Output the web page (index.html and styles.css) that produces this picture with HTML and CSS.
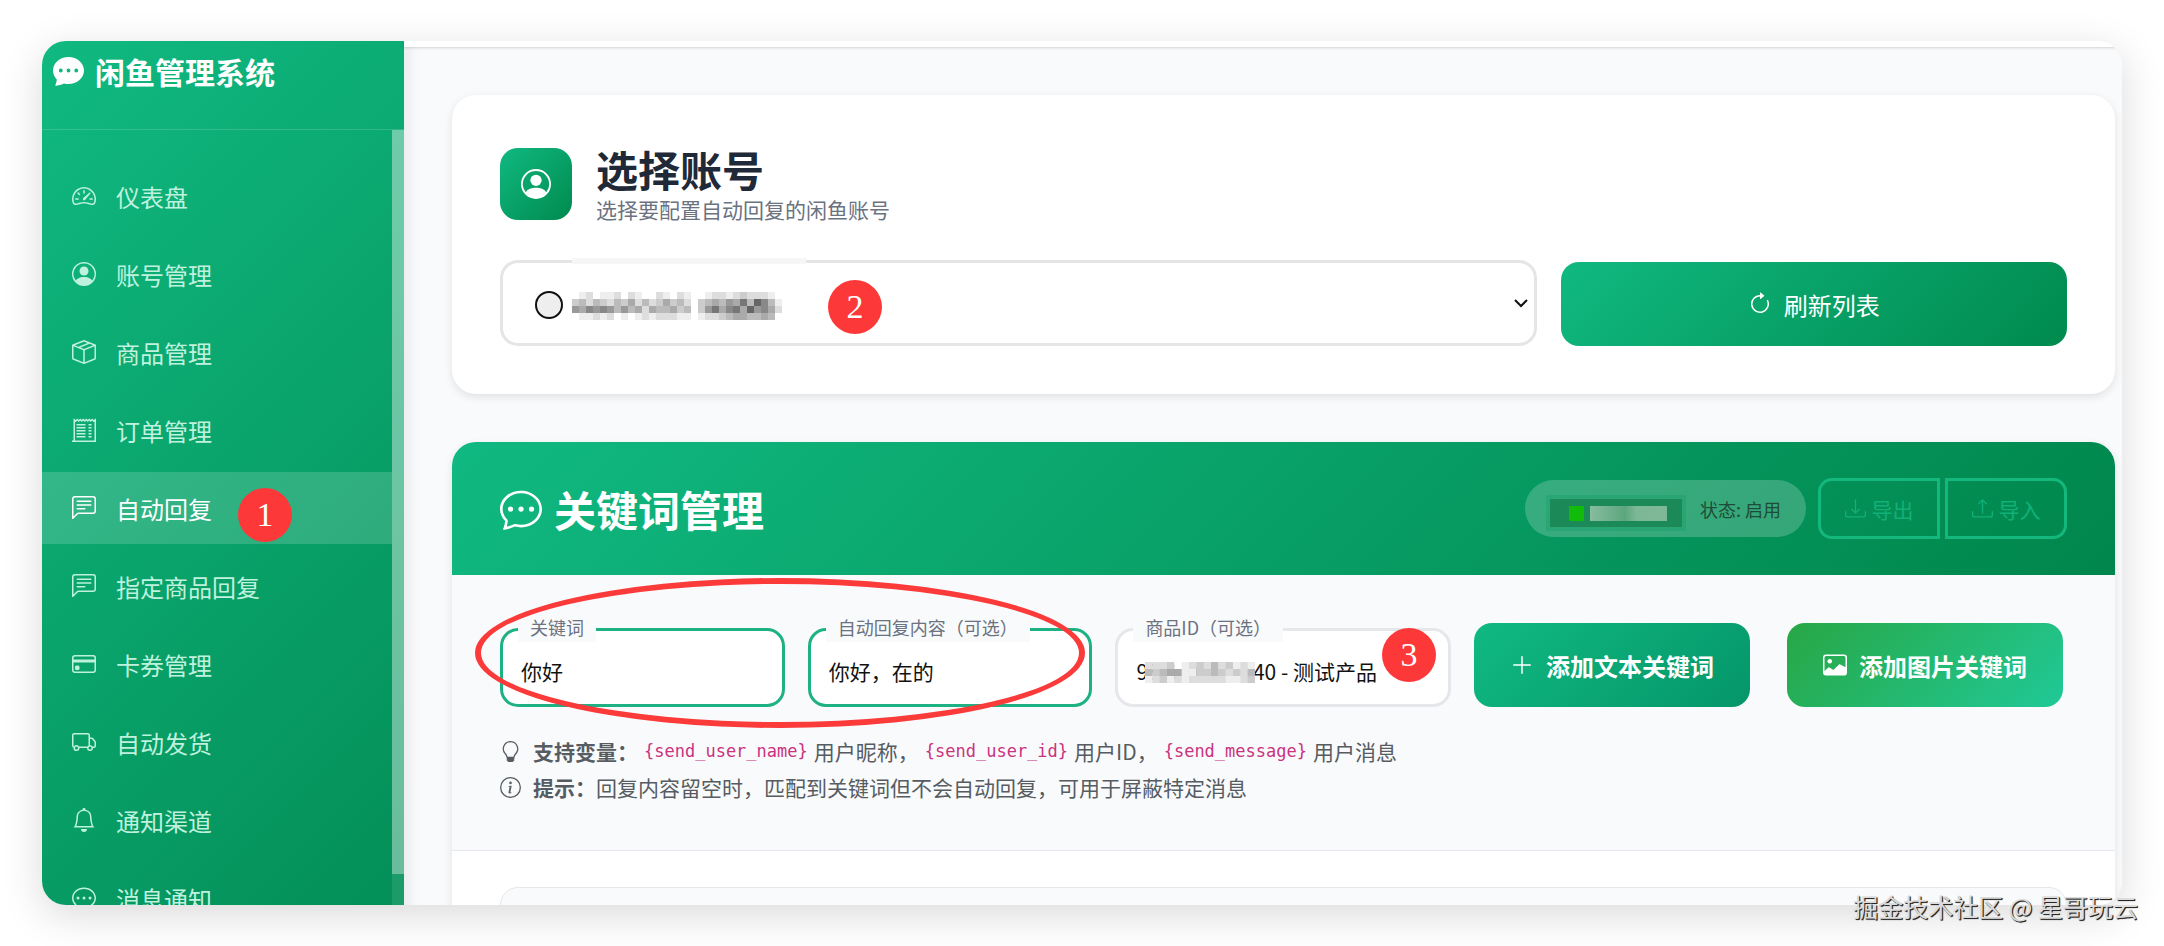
FILE: index.html
```html
<!DOCTYPE html>
<html lang="zh-CN">
<head>
  <meta charset="UTF-8">
  <meta name="viewport" content="width=device-width, initial-scale=1.0">
  <title>闲鱼管理系统</title>
  <link rel="stylesheet" href="styles.css">
</head>
<body>
  <!-- 图标 -->
  <svg class="sprite" aria-hidden="true">
    <symbol id="i-chat-fill" viewBox="0 0 16 16"><path d="M16 8c0 3.866-3.582 7-8 7a9 9 0 0 1-2.347-.306c-.584.296-1.925.864-4.181 1.234-.2.032-.352-.176-.273-.362.354-.836.674-1.95.77-2.966C.744 11.37 0 9.76 0 8c0-3.866 3.582-7 8-7s8 3.134 8 7M5 8a1 1 0 1 0-2 0 1 1 0 0 0 2 0m4 0a1 1 0 1 0-2 0 1 1 0 0 0 2 0m3 1a1 1 0 1 0 0-2 1 1 0 0 0 0 2"/></symbol>
    <symbol id="i-chat-dots" viewBox="0 0 16 16"><path d="M5 8a1 1 0 1 1-2 0 1 1 0 0 1 2 0m4 0a1 1 0 1 1-2 0 1 1 0 0 1 2 0m3 1a1 1 0 1 0 0-2 1 1 0 0 0 0 2"/><path d="m2.165 15.803.02-.004c1.83-.363 2.948-.842 3.468-1.105A9 9 0 0 0 8 15c4.418 0 8-3.134 8-7s-3.582-7-8-7-8 3.134-8 7c0 1.76.743 3.37 1.97 4.6a10.4 10.4 0 0 1-.524 2.318l-.003.011a11 11 0 0 1-.244.637c-.079.186.074.394.273.362a22 22 0 0 0 .693-.125m.8-3.108a1 1 0 0 0-.287-.801C1.618 10.83 1 9.468 1 8c0-3.192 3.004-6 7-6s7 2.808 7 6-3.004 6-7 6a8 8 0 0 1-2.088-.272 1 1 0 0 0-.711.074c-.387.196-1.24.57-2.634.893a11 11 0 0 0 .398-2"/></symbol>
    <symbol id="i-speed" viewBox="0 0 16 16"><path d="M8 4a.5.5 0 0 1 .5.5V6a.5.5 0 0 1-1 0V4.5A.5.5 0 0 1 8 4M3.732 5.732a.5.5 0 0 1 .707 0l.915.914a.5.5 0 1 1-.708.708l-.914-.915a.5.5 0 0 1 0-.707M2 10a.5.5 0 0 1 .5-.5h1.586a.5.5 0 0 1 0 1H2.5A.5.5 0 0 1 2 10m9.5 0a.5.5 0 0 1 .5-.5h1.5a.5.5 0 0 1 0 1H12a.5.5 0 0 1-.5-.5m.754-4.246a.39.39 0 0 0-.527-.02L7.547 9.31a.91.91 0 1 0 1.302 1.258l3.434-4.297a.39.39 0 0 0-.029-.518z"/><path fill-rule="evenodd" d="M0 10a8 8 0 1 1 15.547 2.661c-.442 1.253-1.845 1.602-2.932 1.25C11.309 13.488 9.475 13 8 13c-1.474 0-3.31.488-4.615.911-1.087.352-2.49.003-2.932-1.25A8 8 0 0 1 0 10m8-7a7 7 0 0 0-6.603 9.329c.203.575.923.876 1.68.63C4.397 12.533 6.358 12 8 12s3.604.532 4.923.96c.757.245 1.477-.056 1.68-.631A7 7 0 0 0 8 3"/></symbol>
    <symbol id="i-person" viewBox="0 0 16 16"><path d="M11 6a3 3 0 1 1-6 0 3 3 0 0 1 6 0"/><path fill-rule="evenodd" d="M0 8a8 8 0 1 1 16 0A8 8 0 0 1 0 8m8-7a7 7 0 0 0-5.468 11.37C3.242 11.226 4.805 10 8 10s4.757 1.225 5.468 2.37A7 7 0 0 0 8 1"/></symbol>
    <symbol id="i-box" viewBox="0 0 16 16"><path d="M8.186 1.113a.5.5 0 0 0-.372 0L1.846 3.5l2.404.961L10.404 2zm3.564 1.426L5.596 5 8 5.961 14.154 3.5zm3.25 1.7-6.5 2.6v7.922l6.5-2.6V4.24zM7.5 14.762V6.838L1 4.239v7.923zM7.443.184a1.5 1.5 0 0 1 1.114 0l7.129 2.852A.5.5 0 0 1 16 3.5v8.662a1 1 0 0 1-.629.928l-7.185 2.874a.5.5 0 0 1-.372 0L.63 13.09a1 1 0 0 1-.63-.928V3.5a.5.5 0 0 1 .314-.464z"/></symbol>
    <symbol id="i-receipt" viewBox="0 0 16 16"><path fill="none" stroke="currentColor" d="M1.5 15.5V1.2l1 .8 1-1 1 1 1-1 1 1 1-1 1 1 1-1 1 1 1-1 1 1 1-1 1 1 1-.8v14.3M0 15.5h16M3 4.5h6M3 6.5h6M3 8.5h6M3 10.5h6M3 12.5h6M11 4.5h2M11 6.5h2M11 8.5h2M11 10.5h2M11 12.5h2"/></symbol>
    <symbol id="i-chat-text" viewBox="0 0 16 16"><path d="M14 1a1 1 0 0 1 1 1v8a1 1 0 0 1-1 1H4.414A2 2 0 0 0 3 11.586l-2 2V2a1 1 0 0 1 1-1zM2 0a2 2 0 0 0-2 2v12.793a.5.5 0 0 0 .854.353l2.853-2.853A1 1 0 0 1 4.414 12H14a2 2 0 0 0 2-2V2a2 2 0 0 0-2-2z"/><path d="M3 3.5a.5.5 0 0 1 .5-.5h9a.5.5 0 0 1 0 1h-9a.5.5 0 0 1-.5-.5M3 6a.5.5 0 0 1 .5-.5h9a.5.5 0 0 1 0 1h-9A.5.5 0 0 1 3 6m0 2.5a.5.5 0 0 1 .5-.5h5a.5.5 0 0 1 0 1h-5a.5.5 0 0 1-.5-.5"/></symbol>
    <symbol id="i-card" viewBox="0 0 16 16"><path d="M0 4a2 2 0 0 1 2-2h12a2 2 0 0 1 2 2v8a2 2 0 0 1-2 2H2a2 2 0 0 1-2-2zm2-1a1 1 0 0 0-1 1v1h14V4a1 1 0 0 0-1-1zm13 4H1v5a1 1 0 0 0 1 1h12a1 1 0 0 0 1-1z"/><path d="M2 10a1 1 0 0 1 1-1h1a1 1 0 0 1 1 1v1a1 1 0 0 1-1 1H3a1 1 0 0 1-1-1z"/></symbol>
    <symbol id="i-truck" viewBox="0 0 16 16"><path d="M0 3.5A1.5 1.5 0 0 1 1.5 2h9A1.5 1.5 0 0 1 12 3.5V5h1.02a1.5 1.5 0 0 1 1.17.563l1.481 1.85a1.5 1.5 0 0 1 .329.938V10.5a1.5 1.5 0 0 1-1.5 1.5H14a2 2 0 1 1-4 0H5a2 2 0 1 1-3.998-.085A1.5 1.5 0 0 1 0 10.5zm1.294 7.456A2 2 0 0 1 4.732 11h5.536a2 2 0 0 1 .732-.732V3.5a.5.5 0 0 0-.5-.5h-9a.5.5 0 0 0-.5.5v7a.5.5 0 0 0 .294.456M12 10a2 2 0 0 1 1.732 1h.768a.5.5 0 0 0 .5-.5V8.35a.5.5 0 0 0-.11-.312l-1.48-1.85A.5.5 0 0 0 13.02 6H12zm-9 1a1 1 0 1 0 0 2 1 1 0 0 0 0-2m9 0a1 1 0 1 0 0 2 1 1 0 0 0 0-2"/></symbol>
    <symbol id="i-bell" viewBox="0 0 16 16"><path d="M8 16a2 2 0 0 0 2-2H6a2 2 0 0 0 2 2M8 1.918l-.797.161A4 4 0 0 0 4 6c0 .628-.134 2.197-.459 3.742-.16.767-.376 1.566-.663 2.258h10.244c-.287-.692-.502-1.49-.663-2.258C12.134 8.197 12 6.628 12 6a4 4 0 0 0-3.203-3.92zM14.22 12c.223.447.481.801.78 1H1c.299-.199.557-.553.78-1C2.68 10.2 3 6.88 3 6c0-2.42 1.72-4.44 4.005-4.901a1 1 0 1 1 1.99 0A5 5 0 0 1 13 6c0 .88.32 4.2 1.22 6"/></symbol>
    <symbol id="i-refresh" viewBox="0 0 16 16"><path fill-rule="evenodd" d="M8 3a5 5 0 1 0 4.546 2.914.5.5 0 0 1 .908-.417A6 6 0 1 1 8 2z"/><path d="M8 4.466V.534a.25.25 0 0 1 .41-.192l2.36 1.966c.12.1.12.284 0 .384L8.41 4.658A.25.25 0 0 1 8 4.466"/></symbol>
    <symbol id="i-download" viewBox="0 0 16 16"><path d="M.5 9.9a.5.5 0 0 1 .5.5v2.5a1 1 0 0 0 1 1h12a1 1 0 0 0 1-1v-2.5a.5.5 0 0 1 1 0v2.5a2 2 0 0 1-2 2H2a2 2 0 0 1-2-2v-2.5a.5.5 0 0 1 .5-.5"/><path d="M7.646 11.854a.5.5 0 0 0 .708 0l3-3a.5.5 0 0 0-.708-.708L8.5 10.293V1.5a.5.5 0 0 0-1 0v8.793L5.354 8.146a.5.5 0 1 0-.708.708z"/></symbol>
    <symbol id="i-upload" viewBox="0 0 16 16"><path d="M.5 9.9a.5.5 0 0 1 .5.5v2.5a1 1 0 0 0 1 1h12a1 1 0 0 0 1-1v-2.5a.5.5 0 0 1 1 0v2.5a2 2 0 0 1-2 2H2a2 2 0 0 1-2-2v-2.5a.5.5 0 0 1 .5-.5"/><path d="M7.646 1.146a.5.5 0 0 1 .708 0l3 3a.5.5 0 0 1-.708.708L8.5 2.707V11.5a.5.5 0 0 1-1 0V2.707L5.354 4.854a.5.5 0 1 1-.708-.708z"/></symbol>
    <symbol id="i-plus" viewBox="0 0 16 16"><path d="M8 2a.5.5 0 0 1 .5.5v5h5a.5.5 0 0 1 0 1h-5v5a.5.5 0 0 1-1 0v-5h-5a.5.5 0 0 1 0-1h5v-5A.5.5 0 0 1 8 2"/></symbol>
    <symbol id="i-image" viewBox="0 0 16 16"><path d="M6.002 5.5a1.5 1.5 0 1 1-3 0 1.5 1.5 0 0 1 3 0"/><path d="M2.002 1a2 2 0 0 0-2 2v10a2 2 0 0 0 2 2h12a2 2 0 0 0 2-2V3a2 2 0 0 0-2-2zm12 1a1 1 0 0 1 1 1v6.5l-3.777-1.947a.5.5 0 0 0-.577.093l-3.71 3.71-2.66-1.772a.5.5 0 0 0-.63.062L1.002 12V3a1 1 0 0 1 1-1z"/></symbol>
    <symbol id="i-bulb" viewBox="0 0 16 16"><path d="M2 6a6 6 0 1 1 10.174 4.31c-.203.196-.359.4-.453.619l-.762 1.769A.5.5 0 0 1 10.5 13a.5.5 0 0 1 0 1 .5.5 0 0 1 0 1l-.224.447a1 1 0 0 1-.894.553H6.618a1 1 0 0 1-.894-.553L5.5 15a.5.5 0 0 1 0-1 .5.5 0 0 1 0-1 .5.5 0 0 1-.46-.302l-.761-1.77a2 2 0 0 0-.453-.618A5.98 5.98 0 0 1 2 6m6-5a5 5 0 0 0-3.479 8.592c.263.254.514.564.676.941L5.83 12h4.342l.632-1.467c.162-.377.413-.687.676-.941A5 5 0 0 0 8 1"/></symbol>
    <symbol id="i-info" viewBox="0 0 16 16"><path d="M8 15A7 7 0 1 1 8 1a7 7 0 0 1 0 14m0 1A8 8 0 1 0 8 0a8 8 0 0 0 0 16"/><path d="m8.93 6.588-2.29.287-.082.38.45.083c.294.07.352.176.288.469l-.738 3.468c-.194.897.105 1.319.808 1.319.545 0 1.178-.252 1.465-.598l.088-.416c-.2.176-.492.246-.686.246-.275 0-.375-.193-.304-.533zM9 4.5a1 1 0 1 1-2 0 1 1 0 0 1 2 0"/></symbol>
  </svg>

  <div class="window">
    <aside class="sidebar">
      <div class="brand">
        <svg class="brand-icon"><use href="#i-chat-fill"/></svg>
        <span>闲鱼管理系统</span>
      </div>
      <div class="nav-wrap">
        <nav class="nav">
          <a class="nav-link" href="#"><svg class="icon"><use href="#i-speed"/></svg>仪表盘</a>
          <a class="nav-link" href="#"><svg class="icon"><use href="#i-person"/></svg>账号管理</a>
          <a class="nav-link" href="#"><svg class="icon"><use href="#i-box"/></svg>商品管理</a>
          <a class="nav-link" href="#"><svg class="icon"><use href="#i-receipt"/></svg>订单管理</a>
          <a class="nav-link active" href="#"><svg class="icon"><use href="#i-chat-text"/></svg>自动回复<span class="mark mark-nav">1</span></a>
          <a class="nav-link" href="#"><svg class="icon"><use href="#i-chat-text"/></svg>指定商品回复</a>
          <a class="nav-link" href="#"><svg class="icon"><use href="#i-card"/></svg>卡券管理</a>
          <a class="nav-link" href="#"><svg class="icon"><use href="#i-truck"/></svg>自动发货</a>
          <a class="nav-link" href="#"><svg class="icon"><use href="#i-bell"/></svg>通知渠道</a>
          <a class="nav-link" href="#"><svg class="icon"><use href="#i-chat-dots"/></svg>消息通知</a>
        </nav>
        <div class="scrollbar"><div class="thumb"></div></div>
      </div>
    </aside>

    <main class="main">
      <div class="topbar"></div>
      <div class="content">
        <!-- 选择账号 -->
        <section class="card account">
          <div class="account-head">
            <div class="head-icon"><svg><use href="#i-person"/></svg></div>
            <div>
              <h2 class="title">选择账号</h2>
              <p class="subtitle">选择要配置自动回复的闲鱼账号</p>
            </div>
          </div>
          <div class="row">
            <div class="col-8 select-wrap">
              <select class="account-select" aria-label="选择账号">
                <option></option>
              </select>
              <span class="status-dot"></span>
              <span class="select-patch"></span>
              <svg class="mosaic mosaic-account" viewBox="0 0 30 4" preserveAspectRatio="none" data-rows="fedfeedfdeffdefdeffeddedcdddef,cbdbcdbcadbdcacbdfcbab9a7b68be,9a8989b9badabbacbfc97a87a698ad,feededfefededddeefeddcbaabbabf"></svg>
              <svg class="chevron" viewBox="0 0 14 9"><path d="M1 1l6 6 6-6"/></svg>
              <span class="mark mark-select">2</span>
            </div>
            <div class="col-4">
              <button class="btn btn-refresh" type="button"><svg class="icon"><use href="#i-refresh"/></svg>刷新列表</button>
            </div>
          </div>
        </section>

        <!-- 关键词管理 -->
        <section class="card keyword">
          <div class="keyword-head">
            <h2 class="keyword-title"><svg><use href="#i-chat-dots"/></svg>关键词管理</h2>
            <div class="actions">
              <div class="pill">
                <span class="pill-cover"><i class="pill-green"></i><i class="pill-gray"></i></span>
                <span>状态: 启用</span>
              </div>
              <div class="btn-group">
                <button class="btn-outline" type="button"><svg><use href="#i-download"/></svg>导出</button>
                <button class="btn-outline" type="button"><svg><use href="#i-upload"/></svg>导入</button>
              </div>
            </div>
          </div>
          <div class="keyword-body">
            <div class="form-row">
              <div class="field">
                <label for="keyword">关键词</label>
                <input class="done" id="keyword" type="text" value="你好">
              </div>
              <div class="field">
                <label for="reply">自动回复内容（可选）</label>
                <input class="done" id="reply" type="text" value="你好，在的">
              </div>
              <div class="field field-item">
                <label for="item">商品ID（可选）</label>
                <input id="item" type="text" value="980000000040 - 测试产品">
                <svg class="mosaic mosaic-item" viewBox="0 0 15 3" preserveAspectRatio="none" data-rows="dddcfedcdbdcede,bcbaaeeccbcdcdb,edcededddddeedc"></svg>
                <span class="mark mark-item">3</span>
              </div>
              <button class="btn btn-add" type="button"><svg class="icon"><use href="#i-plus"/></svg>添加文本关键词</button>
              <button class="btn btn-add btn-image" type="button"><svg class="icon"><use href="#i-image"/></svg>添加图片关键词</button>
              <span class="circle"></span>
            </div>
            <div class="hints">
              <p><svg><use href="#i-bulb"/></svg><strong>支持变量：</strong><code>{send_user_name}</code>用户昵称，<code>{send_user_id}</code>用户ID，<code>{send_message}</code>用户消息</p>
              <p><svg><use href="#i-info"/></svg><strong>提示：</strong>回复内容留空时，匹配到关键词但不会自动回复，可用于屏蔽特定消息</p>
            </div>
          </div>
          <div class="list-wrap">
            <div class="list"></div>
          </div>
        </section>
      </div>
    </main>
  </div>
  <div class="watermark">掘金技术社区 @ 星哥玩云</div>
  <script src="script.js"></script>
</body>
</html>
```
FILE: styles.css
```css
* {
  box-sizing: border-box;
}

body {
  margin: 0;
  padding: 41px 42px;
  background: #fff;
  font-family: "Noto Sans CJK SC", sans-serif;
  color: #1f2937;
}

h2,
p {
  margin: 0;
}

svg {
  fill: currentColor;
  flex: none;
}

.sprite {
  display: none;
}

.window {
  display: flex;
  height: calc(100vh - 82px);
  border-radius: 24px;
  overflow: hidden;
  box-shadow: 0 10px 40px rgba(0, 0, 0, 0.15);
}

/* 侧边栏 */
.sidebar {
  width: 362px;
  flex: none;
  display: flex;
  flex-direction: column;
  background: linear-gradient(135deg, #10b981, #038f57);
  color: #fff;
}

.brand {
  height: 89px;
  flex: none;
  display: flex;
  gap: 11px;
  padding: 8px 11px;
  font-size: 30px;
  line-height: 44px;
  font-weight: bold;
  border-bottom: 1px solid rgba(255, 255, 255, 0.15);
}

.brand-icon {
  width: 31px;
  height: 31px;
  margin-top: 6px;
}

.nav-wrap {
  flex: 1;
  min-height: 0;
  display: flex;
}

.nav {
  flex: 1;
  padding-top: 30px;
  overflow: hidden;
}

.nav-link {
  position: relative;
  display: flex;
  align-items: center;
  gap: 20px;
  height: 72px;
  margin-bottom: 6px;
  padding-left: 30px;
  font-size: 24px;
  color: #bff2de;
  text-decoration: none;
}

.nav-link.active {
  color: #fff;
  background: rgba(255, 255, 255, 0.16);
}

.icon {
  width: 24px;
  height: 24px;
}

.scrollbar {
  width: 12px;
  background: rgba(255, 255, 255, 0.1);
}

.thumb {
  height: 96%;
  background: rgba(255, 255, 255, 0.34);
}

/* 主区域 */
.main {
  flex: 1;
  min-width: 0;
  background: #f9fafc;
  box-shadow: inset 14px 0 12px -8px rgba(0, 0, 0, 0.06);
}

.topbar {
  height: 6px;
  background: #fff;
  box-shadow: 0 1px 3px rgba(0, 0, 0, 0.16);
}

.content {
  padding: 48px 7px 0 48px;
}

.card {
  background: #fff;
  border-radius: 24px;
  box-shadow: 0 3px 8px rgba(0, 0, 0, 0.1);
}

.account {
  padding: 53px 48px 48px;
  margin-bottom: 48px;
}

.account-head {
  display: flex;
  gap: 24px;
  margin-bottom: 37px;
}

.head-icon {
  width: 72px;
  height: 72px;
  display: flex;
  align-items: center;
  justify-content: center;
  border-radius: 18px;
  color: #fff;
  background: linear-gradient(135deg, #10b981, #008a4e);
}

.head-icon svg {
  width: 30px;
  height: 30px;
}

.title {
  font-size: 42px;
  line-height: 42px;
}

.subtitle {
  font-size: 21px;
  line-height: 28px;
  margin-top: 5px;
  color: #6b7280;
}

.row {
  display: flex;
  align-items: flex-end;
  margin: 0 -12px;
}

.col-8,
.col-4 {
  padding: 0 12px;
}

.col-8 {
  width: 66.67%;
}

.col-4 {
  width: 33.33%;
}

.select-wrap {
  position: relative;
}

.account-select {
  display: block;
  width: 100%;
  height: 86px;
  appearance: none;
  border: 3px solid #e5e5e5;
  border-radius: 18px;
  background: #fff;
}

.status-dot {
  position: absolute;
  left: 47px;
  top: 31px;
  width: 28px;
  height: 28px;
  border: 2px solid #111;
  border-radius: 50%;
  background: #eee;
}

.select-patch {
  position: absolute;
  left: 84px;
  top: -2px;
  width: 234px;
  height: 6px;
  background: #f6f6f6;
}

.mosaic {
  position: absolute;
}

.mosaic-account {
  left: 84px;
  top: 32px;
  width: 210px;
  height: 28px;
}

.chevron {
  position: absolute;
  right: 21px;
  top: 39px;
  width: 14px;
  height: 9px;
  fill: none;
  stroke: #111;
  stroke-width: 2;
}

.mark {
  position: absolute;
  width: 54px;
  height: 54px;
  border-radius: 50%;
  background: #fd3838;
  color: #fff;
  font-family: "Liberation Serif", serif;
  font-size: 34px;
  line-height: 54px;
  text-align: center;
}

.mark-nav {
  left: 196px;
  top: 16px;
}

.mark-select {
  left: 340px;
  top: 20px;
}

.mark-item {
  right: 15px;
  top: 0;
}

.btn {
  height: 84px;
  display: flex;
  align-items: center;
  justify-content: center;
  gap: 12px;
  border: none;
  border-radius: 18px;
  color: #fff;
  font-family: inherit;
  font-size: 24px;
  cursor: pointer;
}

.btn-refresh {
  width: 100%;
  background: linear-gradient(135deg, #10b981, #008a4e);
}

.keyword-head {
  display: flex;
  align-items: center;
  justify-content: space-between;
  height: 133px;
  padding: 0 48px;
  border-radius: 24px 24px 0 0;
  background: linear-gradient(135deg, #10b981, #00864c);
}

.keyword-title {
  display: flex;
  align-items: center;
  gap: 12px;
  color: #fff;
  font-size: 42px;
}

.keyword-title svg {
  width: 42px;
  height: 42px;
}

.actions {
  display: flex;
  align-items: center;
  gap: 12px;
}

.pill {
  position: relative;
  display: flex;
  align-items: center;
  justify-content: flex-end;
  width: 281px;
  height: 57px;
  padding-right: 25px;
  border-radius: 29px;
  background: rgba(255, 255, 255, 0.2);
  color: #1d4d38;
  font-size: 18px;
}

/* 打码区域 */
.pill-cover {
  position: absolute;
  left: 25px;
  top: 19px;
  width: 132px;
  height: 28px;
  display: flex;
  align-items: center;
  gap: 6px;
  padding-left: 19px;
  background: #1c8a58;
  box-shadow: 0 0 0 4px rgba(4, 150, 92, 0.25);
}

.pill-green {
  width: 15px;
  height: 15px;
  background: #10bb0a;
}

.pill-gray {
  width: 77px;
  height: 15px;
  background: linear-gradient(90deg, #86bd9f, #6cae8a 30%, #5ca67d 45%, #7cb896 60%, #7fb897);
}

.btn-group {
  display: flex;
  gap: 5px;
}

.btn-outline {
  display: flex;
  align-items: center;
  justify-content: center;
  gap: 6px;
  width: 122px;
  height: 61px;
  border: 3px solid #14b87c;
  background: none;
  color: #12b078;
  font-family: inherit;
  font-size: 21px;
}

.btn-outline svg {
  width: 21px;
  height: 21px;
}

.btn-outline:first-child {
  border-radius: 14px 0 0 14px;
}

.btn-outline:last-child {
  border-radius: 0 14px 14px 0;
}

.keyword-body {
  padding: 48px 48px 45px;
  background: #f9fafc;
  border-bottom: 1px solid #e5e7eb;
}

.form-row {
  position: relative;
  display: flex;
  align-items: flex-end;
  gap: 23px;
}

.field {
  position: relative;
  flex: 285;
  min-width: 0;
}

.field-item {
  flex-grow: 336;
}

.field label {
  position: absolute;
  left: 18px;
  top: -16px;
  padding: 0 12px;
  background: #f9fafc;
  color: #6b7280;
  font-size: 18px;
  line-height: 30px;
}

.field input {
  display: block;
  width: 100%;
  height: 79px;
  padding: 6px 18px 0;
  border: 3px solid #e5e7eb;
  border-radius: 18px;
  background: #fff;
  color: #111;
  font-family: inherit;
  font-size: 21px;
}

.field .done {
  border-color: #1eb184;
}

.mosaic-item {
  left: 30px;
  top: 34px;
  width: 110px;
  height: 21px;
}

.btn-add {
  width: 276px;
  font-weight: bold;
  background: linear-gradient(135deg, #10b981, #059669);
}

.btn-image {
  margin: 0 4px 0 14px;
  background: linear-gradient(135deg, #28a745, #20c997);
}

.circle {
  position: absolute;
  left: -25px;
  top: -45px;
  width: 610px;
  height: 150px;
  border: 6px solid #fb3a3a;
  border-radius: 50%;
}

.hints {
  margin-top: 26px;
  color: #565c61;
  font-size: 21px;
  line-height: 36px;
}

.hints p {
  display: flex;
  align-items: center;
}

.hints svg {
  width: 21px;
  height: 21px;
  margin-right: 12px;
}

.hints code {
  padding: 0 6px;
  color: #c9337f;
  font-family: "DejaVu Sans Mono", monospace;
  font-size: 17px;
}

.list-wrap {
  padding: 36px 48px;
}

.list {
  height: 60px;
  border: 1px solid #e5e7eb;
  border-radius: 18px;
  background: #f8fafb;
}

.watermark {
  position: absolute;
  right: 26px;
  bottom: 22px;
  color: #dcdcdc;
  font-size: 25px;
  line-height: 36px;
  text-shadow: 1px 1px 1px #222, 1px 1px 0 #555;
}
```
FILE: script.js
```js
// 打码块: 每个字符是一个格子的灰度 (0-f)
document.querySelectorAll('.mosaic').forEach(function (svg) {
  svg.dataset.rows.split(',').forEach(function (row, y) {
    row.split('').forEach(function (shade, x) {
      const rect = document.createElementNS('http://www.w3.org/2000/svg', 'rect')
      rect.setAttribute('x', x)
      rect.setAttribute('y', y)
      rect.setAttribute('width', 1.05)
      rect.setAttribute('height', 1.05)
      rect.setAttribute('fill', '#' + shade + shade + shade)
      svg.appendChild(rect)
    })
  })
})
```
